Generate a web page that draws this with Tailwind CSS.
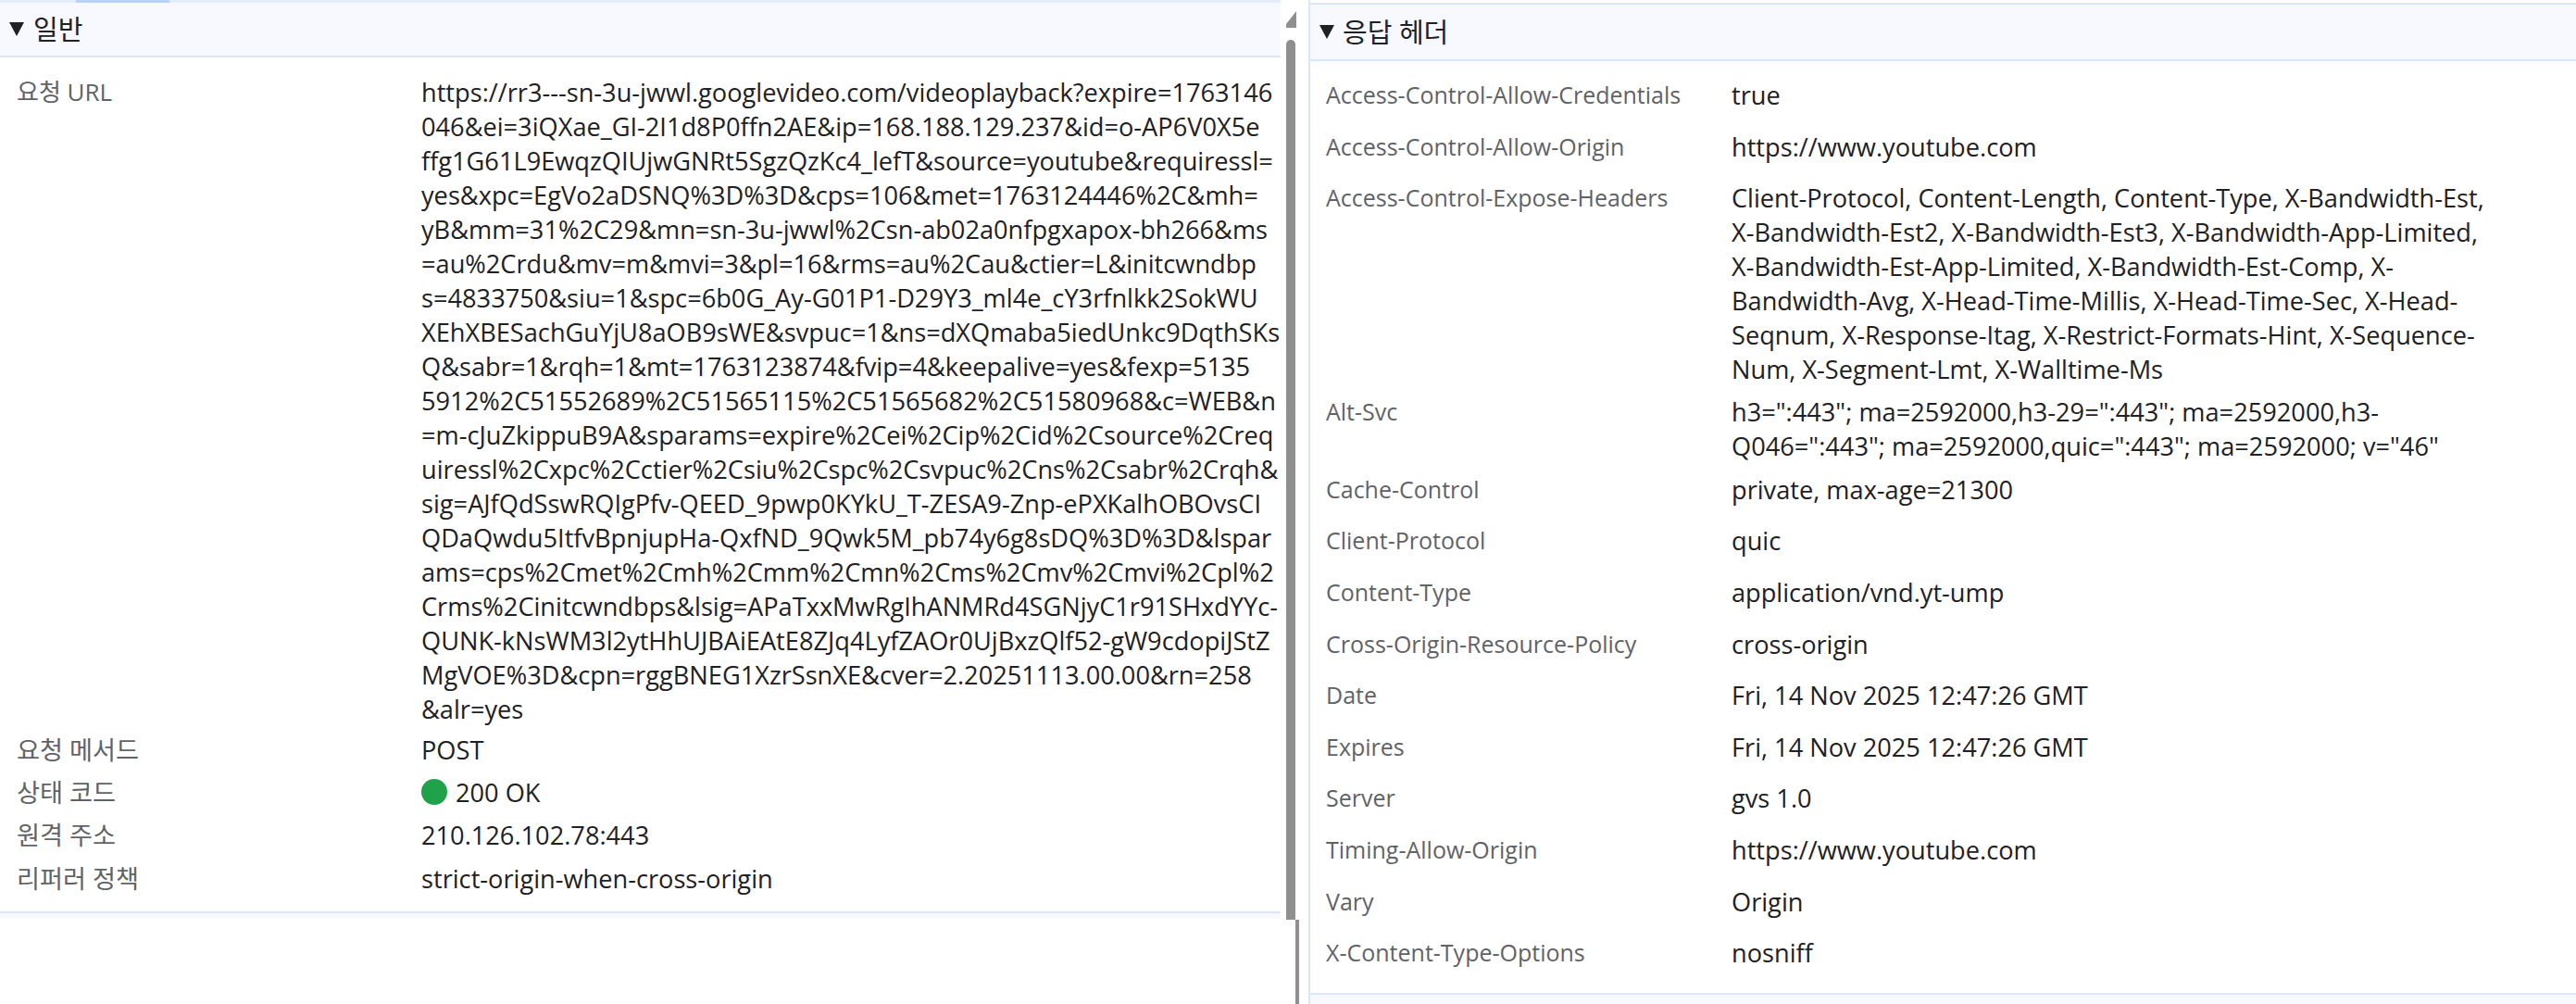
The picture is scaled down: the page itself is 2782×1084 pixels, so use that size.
<!DOCTYPE html>
<html lang="ko">
<head>
    <meta charset="UTF-8">
    <title>네트워크 헤더</title>
    <script src="https://cdn.jsdelivr.net/npm/@tailwindcss/browser@4"></script>
</head>
<body class="bg-white">
    <div class="flex h-[1084px] w-[2782px] overflow-hidden font-['Open_Sans','Noto_Sans_CJK_KR',sans-serif] text-[27.2px] leading-[37px] text-[#202124]">

        <!-- left: general -->
        <section class="w-[1383px] shrink-0">
            <div class="flex h-[3px] bg-[#e3ecfb]">
                <div class="ml-[82px] w-[101px] bg-[#b9d2f8]"></div>
            </div>
            <h2 class="flex h-[59px] items-center gap-[10px] border-b-2 border-[#dbe6fb] bg-[#f8f9fe] pl-[10px]">
                <svg width="16" height="15" viewBox="0 0 16 15"><path d="M0 0H16L8 15Z" fill="#202124"/></svg><span class="text-[29px]">일반</span>
            </h2>
            <div class="flex pt-[19px]">
                <div class="w-[455px] shrink-0 pl-[18px] text-[26px] text-[#5f6368]">요청 URL</div>
                <div class="whitespace-nowrap">
                    https://rr3---sn-3u-jwwl.googlevideo.com/videoplayback?expire=1763146<br>
                    046&amp;ei=3iQXae_GI-2I1d8P0ffn2AE&amp;ip=168.188.129.237&amp;id=o-AP6V0X5e<br>
                    ffg1G61L9EwqzQIUjwGNRt5SgzQzKc4_lefT&amp;source=youtube&amp;requiressl=<br>
                    yes&amp;xpc=EgVo2aDSNQ%3D%3D&amp;cps=106&amp;met=1763124446%2C&amp;mh=<br>
                    yB&amp;mm=31%2C29&amp;mn=sn-3u-jwwl%2Csn-ab02a0nfpgxapox-bh266&amp;ms<br>
                    =au%2Crdu&amp;mv=m&amp;mvi=3&amp;pl=16&amp;rms=au%2Cau&amp;ctier=L&amp;initcwndbp<br>
                    s=4833750&amp;siu=1&amp;spc=6b0G_Ay-G01P1-D29Y3_ml4e_cY3rfnlkk2SokWU<br>
                    XEhXBESachGuYjU8aOB9sWE&amp;svpuc=1&amp;ns=dXQmaba5iedUnkc9DqthSKs<br>
                    Q&amp;sabr=1&amp;rqh=1&amp;mt=1763123874&amp;fvip=4&amp;keepalive=yes&amp;fexp=5135<br>
                    5912%2C51552689%2C51565115%2C51565682%2C51580968&amp;c=WEB&amp;n<br>
                    =m-cJuZkippuB9A&amp;sparams=expire%2Cei%2Cip%2Cid%2Csource%2Creq<br>
                    uiressl%2Cxpc%2Cctier%2Csiu%2Cspc%2Csvpuc%2Cns%2Csabr%2Crqh&amp;<br>
                    sig=AJfQdSswRQIgPfv-QEED_9pwp0KYkU_T-ZESA9-Znp-ePXKalhOBOvsCI<br>
                    QDaQwdu5ItfvBpnjupHa-QxfND_9Qwk5M_pb74y6g8sDQ%3D%3D&amp;lspar<br>
                    ams=cps%2Cmet%2Cmh%2Cmm%2Cmn%2Cms%2Cmv%2Cmvi%2Cpl%2<br>
                    Crms%2Cinitcwndbps&amp;lsig=APaTxxMwRgIhANMRd4SGNjyC1r91SHxdYYc-<br>
                    QUNK-kNsWM3l2ytHhUJBAiEAtE8ZJq4LyfZAOr0UjBxzQlf52-gW9cdopiJStZ<br>
                    MgVOE%3D&amp;cpn=rggBNEG1XzrSsnXE&amp;cver=2.20251113.00.00&amp;rn=258<br>
                    &amp;alr=yes
                </div>
            </div>
            <div class="grid grid-cols-[455px_1fr] auto-rows-[46.3px] items-center pt-[2px]">
                <div class="pl-[18px] text-[#5f6368]">요청 메서드</div>
                <div>POST</div>
                <div class="pl-[18px] text-[#5f6368]">상태 코드</div>
                <div class="flex items-center gap-[9px]"><span class="h-[28px] w-[28px] rounded-full bg-[#1fa24a]"></span>200 OK</div>
                <div class="pl-[18px] text-[#5f6368]">원격 주소</div>
                <div>210.126.102.78:443</div>
                <div class="pl-[18px] text-[#5f6368]">리퍼러 정책</div>
                <div>strict-origin-when-cross-origin</div>
            </div>
            <div class="mt-[13px] h-[8px] border-t-2 border-[#dbe6fb] bg-[#f8f9fe]"></div>
        </section>

        <!-- scrollbar between the panes -->
        <div class="w-[30px] shrink-0">
            <svg class="ml-[6px] mt-[12px] block" width="11" height="18" viewBox="0 0 11 18"><path d="M11 0V18H0V14Z" fill="#8f8f8f"/></svg>
            <div class="ml-[6px] mt-[13px] h-[950px] w-[10px] rounded-t-[6px] bg-[#8f8f8f]"></div>
            <div class="ml-[16px] h-[91px] w-[4px] bg-[#8f8f8f]"></div>
        </div>

        <!-- right: response headers -->
        <section class="flex-1 border-l-2 border-[#dbe6fb]">
            <div class="h-[5px] border-b-2 border-[#dbe6fb]"></div>
            <h2 class="flex h-[61px] items-center gap-[9px] border-b-2 border-[#dbe6fb] bg-[#f8f9fe] pl-[10px]">
                <svg width="16" height="15" viewBox="0 0 16 15"><path d="M0 0H16L8 15Z" fill="#202124"/></svg><span class="text-[29px]">응답 헤더</span>
            </h2>
            <div class="pt-[18px]">
                <div class="flex pb-[18.6px]"><div class="w-[455px] shrink-0 pl-[17px] text-[25px] text-[#5f6368]">Access-Control-Allow-Credentials</div><div>true</div></div>
                <div class="flex pb-[18.6px]"><div class="w-[455px] shrink-0 pl-[17px] text-[25px] text-[#5f6368]">Access-Control-Allow-Origin</div><div>https://www.youtube.com</div></div>
                <div class="flex pb-[9.3px]">
                    <div class="w-[455px] shrink-0 pl-[17px] text-[25px] text-[#5f6368]">Access-Control-Expose-Headers</div>
                    <div class="whitespace-nowrap">
                        Client-Protocol, Content-Length, Content-Type, X-Bandwidth-Est,<br>
                        X-Bandwidth-Est2, X-Bandwidth-Est3, X-Bandwidth-App-Limited,<br>
                        X-Bandwidth-Est-App-Limited, X-Bandwidth-Est-Comp, X-<br>
                        Bandwidth-Avg, X-Head-Time-Millis, X-Head-Time-Sec, X-Head-<br>
                        Seqnum, X-Response-Itag, X-Restrict-Formats-Hint, X-Sequence-<br>
                        Num, X-Segment-Lmt, X-Walltime-Ms
                    </div>
                </div>
                <div class="flex pb-[9.3px]">
                    <div class="w-[455px] shrink-0 pl-[17px] text-[25px] text-[#5f6368]">Alt-Svc</div>
                    <div class="whitespace-nowrap">
                        h3=":443"; ma=2592000,h3-29=":443"; ma=2592000,h3-<br>
                        Q046=":443"; ma=2592000,quic=":443"; ma=2592000; v="46"
                    </div>
                </div>
                <div class="flex pb-[18.6px]"><div class="w-[455px] shrink-0 pl-[17px] text-[25px] text-[#5f6368]">Cache-Control</div><div>private, max-age=21300</div></div>
                <div class="flex pb-[18.6px]"><div class="w-[455px] shrink-0 pl-[17px] text-[25px] text-[#5f6368]">Client-Protocol</div><div>quic</div></div>
                <div class="flex pb-[18.6px]"><div class="w-[455px] shrink-0 pl-[17px] text-[25px] text-[#5f6368]">Content-Type</div><div>application/vnd.yt-ump</div></div>
                <div class="flex pb-[18.6px]"><div class="w-[455px] shrink-0 pl-[17px] text-[25px] text-[#5f6368]">Cross-Origin-Resource-Policy</div><div>cross-origin</div></div>
                <div class="flex pb-[18.6px]"><div class="w-[455px] shrink-0 pl-[17px] text-[25px] text-[#5f6368]">Date</div><div>Fri, 14 Nov 2025 12:47:26 GMT</div></div>
                <div class="flex pb-[18.6px]"><div class="w-[455px] shrink-0 pl-[17px] text-[25px] text-[#5f6368]">Expires</div><div>Fri, 14 Nov 2025 12:47:26 GMT</div></div>
                <div class="flex pb-[18.6px]"><div class="w-[455px] shrink-0 pl-[17px] text-[25px] text-[#5f6368]">Server</div><div>gvs 1.0</div></div>
                <div class="flex pb-[18.6px]"><div class="w-[455px] shrink-0 pl-[17px] text-[25px] text-[#5f6368]">Timing-Allow-Origin</div><div>https://www.youtube.com</div></div>
                <div class="flex pb-[18.6px]"><div class="w-[455px] shrink-0 pl-[17px] text-[25px] text-[#5f6368]">Vary</div><div>Origin</div></div>
                <div class="flex pb-[18.6px]"><div class="w-[455px] shrink-0 pl-[17px] text-[25px] text-[#5f6368]">X-Content-Type-Options</div><div>nosniff</div></div>
            </div>
            <div class="mt-[6px] h-[12px] border-t-2 border-[#dbe6fb] bg-[#f8f9fe]"></div>
        </section>
    </div>
</body>
</html>
